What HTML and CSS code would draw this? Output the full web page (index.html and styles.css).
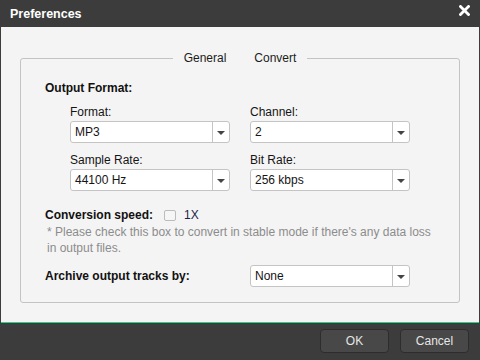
FILE: index.html
```html
<!DOCTYPE html>
<html lang="en">
<head>
    <meta charset="UTF-8">
    <meta name="viewport" content="width=device-width, initial-scale=1.0">
    <link rel="stylesheet" href="styles.css">
    <title>Preferences</title>
</head>
<body>
    <div class="dialog">

        <div class="titlebar">
            <h1>Preferences</h1>
            <svg class="close" width="11" height="11" viewBox="0 0 11 11">
                <path d="M1.5 1.5 L9.5 9.5 M9.5 1.5 L1.5 9.5" stroke="#fff" stroke-width="2.8" stroke-linecap="square"/>
            </svg>
        </div>

        <div class="content">
            <div class="groupbox">
                <div class="tabs">
                    <span class="tab">General</span>
                    <span class="tab">Convert</span>
                </div>

                <h3>Output Format:</h3>
                <div class="formgrid">
                    <div class="field">
                        <label>Format:</label>
                        <div class="dropdown"><span>MP3</span><i class="arrow"></i></div>
                    </div>
                    <div class="field">
                        <label>Channel:</label>
                        <div class="dropdown"><span>2</span><i class="arrow"></i></div>
                    </div>
                    <div class="field">
                        <label>Sample Rate:</label>
                        <div class="dropdown"><span>44100 Hz</span><i class="arrow"></i></div>
                    </div>
                    <div class="field">
                        <label>Bit Rate:</label>
                        <div class="dropdown"><span>256 kbps</span><i class="arrow"></i></div>
                    </div>
                </div>

                <div class="speedrow">
                    <h3>Conversion speed:</h3>
                    <span class="checkbox"></span>
                    <span class="speed">1X</span>
                </div>
                <p class="note">* Please check this box to convert in stable mode if there's any data loss in output files.</p>

                <div class="archiverow">
                    <h3>Archive output tracks by:</h3>
                    <div class="dropdown"><span>None</span><i class="arrow"></i></div>
                </div>
            </div>
        </div>

        <div class="footer">
            <button class="btn">OK</button>
            <button class="btn">Cancel</button>
        </div>
    </div>
</body>
</html>
```

FILE: styles.css
```css
*{
    margin:0px;
    padding:0px;
    box-sizing: border-box;
}
body{
    width: 480px;
    height: 360px;
    background-color: #3c3c3c;
    font-family: "Liberation Sans", Arial, sans-serif;
    font-size: 12px;
    color: #151515;
    overflow: hidden;
}
.titlebar{
    height: 27px;
    display: flex;
    align-items: center;
    justify-content: space-between;
    padding: 0 10px 0 10px;
}
.titlebar h1{
    font-size: 12.5px;
    font-weight: bold;
    color: #ffffff;
    margin-top: 1px;
}
.titlebar .close{
    margin-top: -7px;
}
.content{
    height: 296px;
    margin: 0 1px;
    background-color: #f4f4f4;
    border-bottom: 1px solid #2bd184;
    padding: 31px 19px 0 19px;
}
.groupbox{
    position: relative;
    height: 245px;
    border: 1px solid #c3c3c3;
    border-radius: 3px;
    padding: 22px 24px 0 24px;
}
.tabs{
    position: absolute;
    top: -9px;
    left: 152px;
    width: 134px;
    display: flex;
    justify-content: center;
    gap: 4px;
    background-color: #f4f4f4;
    line-height: 16px;
}
.tab{
    padding: 0 12px;
    color: #1c1c1c;
}
h3{
    font-size: 12px;
    font-weight: bold;
    line-height: 14px;
    color: #111111;
}
.formgrid{
    display: grid;
    grid-template-columns: 160px 160px;
    column-gap: 20px;
    row-gap: 10px;
    margin: 10px 0 0 25px;
}
.field label{
    display: block;
    line-height: 14px;
    margin-bottom: 2px;
}
.dropdown{
    width: 160px;
    height: 22px;
    display: flex;
    align-items: center;
    background-color: #ffffff;
    border: 1px solid #c4c4c4;
    border-radius: 3px;
}
.dropdown span{
    flex: 1;
    padding-left: 4px;
    line-height: 20px;
}
.dropdown .arrow{
    width: 17px;
    height: 20px;
    border-left: 1px solid #c4c4c4;
    position: relative;
}
.dropdown .arrow::after{
    content: "";
    position: absolute;
    left: 4px;
    top: 9px;
    border-left: 4px solid transparent;
    border-right: 4px solid transparent;
    border-top: 4px solid #444444;
}
.speedrow{
    display: flex;
    align-items: center;
    margin-top: 17px;
}
.checkbox{
    width: 12px;
    height: 11px;
    margin-left: 11px;
    border: 1px solid #bcbcbc;
    border-radius: 2px;
    background-color: #f6f6f6;
}
.speed{
    margin-left: 8px;
    color: #1e1e48;
    line-height: 14px;
}
.note{
    margin: 2px 0 0 2px;
    line-height: 16px;
    color: #8c8c8c;
    width: 394px;
}
.archiverow{
    display: flex;
    align-items: center;
    justify-content: space-between;
    width: 365px;
    margin-top: 9px;
}
.footer{
    height: 37px;
    display: flex;
    justify-content: flex-end;
    gap: 11px;
    padding: 6px 11px 0 0;
}
.btn{
    width: 69px;
    height: 24px;
    font-family: "Liberation Sans", Arial, sans-serif;
    font-size: 12px;
    color: #e6e6e6;
    background-color: #484848;
    border: 1px solid #2d2d2d;
    border-radius: 4px;
}
```
